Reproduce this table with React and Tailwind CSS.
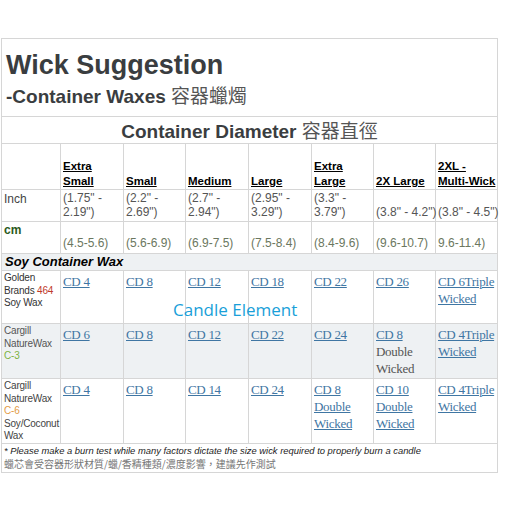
import React from "react";

const B = "border border-[#d6d6d6]";
const SANS = "font-['Liberation_Sans',Arial,'Noto_Sans_CJK_TC',sans-serif]";
const SERIF = "font-['Liberation_Serif','Times_New_Roman',serif]";

function L({ children, plain }) {
  return (
    <span className={plain ? "text-[#555]" : "text-[#3f76a3] underline underline-offset-[1px]"}>{children}</span>
  );
}

function LinkCell({ lines, bg = "" }) {
  return (
    <td className={`${B} ${bg} ${SERIF} align-top pl-[2px] pt-[2px] text-[13px] leading-[17px] tracking-[-0.3px]`}>
      {lines}
    </td>
  );
}

export default function App() {
  const sizes = [
    ["Extra", "Small"],
    ["Small"],
    ["Medium"],
    ["Large"],
    ["Extra", "Large"],
    ["2X Large"],
    ["2XL -", "Multi-Wick"],
  ];
  const inch = [
    ["(1.75\" -", "2.19\")"],
    ["(2.2\" -", "2.69\")"],
    ["(2.7\" -", "2.94\")"],
    ["(2.95\" -", "3.29\")"],
    ["(3.3\" -", "3.79\")"],
    ["(3.8\" - 4.2\")"],
    ["(3.8\" - 4.5\")"],
  ];
  const cm = ["(4.5-5.6)", "(5.6-6.9)", "(6.9-7.5)", "(7.5-8.4)", "(8.4-9.6)", "(9.6-10.7)", "9.6-11.4)"];
  const grey = "bg-[#eef1f3]";

  return (
    <div className={`relative w-[512px] h-[512px] bg-white pt-[38px] pl-px ${SANS}`}>
      <table className="table-fixed border-collapse w-[497px]">
        <colgroup>
          <col className="w-[59px]" />
          <col className="w-[63px]" />
          <col className="w-[62px]" />
          <col className="w-[63px]" />
          <col className="w-[63px]" />
          <col className="w-[62px]" />
          <col className="w-[62px]" />
          <col className="w-[62px]" />
        </colgroup>
        <tbody>
          <tr className="h-[78px]">
            <td colSpan={8} className={`${B} align-top pl-[4px] pt-[10px]`}>
              <div className="text-[27px] leading-[32px] font-bold text-[#3a3d40]">Wick Suggestion</div>
              <div className="mt-[3px] text-[19px] leading-[22px] font-bold text-[#3a3d40]">
                -Container Waxes{" "}
                <span className="font-normal text-[#555] font-['Noto_Sans_CJK_TC',sans-serif]">容器蠟燭</span>
              </div>
            </td>
          </tr>
          <tr className="h-[26px]">
            <td colSpan={8} className={`${B} text-center text-[19px] leading-[22px] font-bold text-[#3a3d40] pt-[2px]`}>
              Container Diameter{" "}
              <span className="font-normal text-[#555] font-['Noto_Sans_CJK_TC',sans-serif]">容器直徑</span>
            </td>
          </tr>
          <tr className="h-[46px]">
            <td className={B}></td>
            {sizes.map((s, i) => (
              <td key={i} className={`${B} align-bottom pl-[2px] pb-0 text-[11.5px] leading-[15px] font-bold text-black underline`}>
                {s.map((t, j) => (
                  <div key={j} className="whitespace-nowrap">{t}</div>
                ))}
              </td>
            ))}
          </tr>
          <tr className="h-[32px]">
            <td className={`${B} align-top pl-[2px] pt-[2px] text-[12px] leading-[14px] text-[#444]`}>Inch</td>
            {inch.map((s, i) => (
              <td key={i} className={`${B} align-bottom pl-[2px] pb-[2px] text-[12px] leading-[14px] text-[#555]`}>
                {s.map((t, j) => (
                  <div key={j} className="whitespace-nowrap">{t}</div>
                ))}
              </td>
            ))}
          </tr>
          <tr className="h-[32px]">
            <td className={`${B} align-top pl-[2px] pt-[1px] text-[12px] leading-[14px] font-bold text-[#2b5a1c]`}>cm</td>
            {cm.map((t, i) => (
              <td key={i} className={`${B} align-bottom pl-[2px] pb-[3px] text-[12px] leading-[14px] text-[#6b7760] whitespace-nowrap`}>
                {t}
              </td>
            ))}
          </tr>
          <tr className="h-[17px]">
            <td colSpan={8} className={`${B} ${grey} pl-[3px] text-[13px] leading-[16px] font-bold italic text-black`}>
              Soy Container Wax
            </td>
          </tr>
          <tr className="h-[53px]">
            <td className={`${B} align-top pl-[2px] pt-[1px] text-[10px] leading-[12.5px] text-[#333] tracking-[-0.2px]`}>
              Golden
              <br />
              Brands <span className="text-[#c0392b]">464</span>
              <br />
              Soy Wax
            </td>
            <LinkCell lines={<L>CD 4</L>} />
            <LinkCell lines={<L>CD 8</L>} />
            <LinkCell lines={<L>CD 12</L>} />
            <LinkCell lines={<L>CD 18</L>} />
            <LinkCell lines={<L>CD 22</L>} />
            <LinkCell lines={<L>CD 26</L>} />
            <LinkCell lines={<L>CD 6Triple Wicked</L>} />
          </tr>
          <tr className="h-[55px]">
            <td className={`${B} ${grey} align-top pl-[2px] pt-[1px] text-[10px] leading-[12.5px] text-[#555] tracking-[-0.2px]`}>
              Cargill
              <br />
              NatureWax
              <br />
              <span className="text-[#7cb342]">C-3</span>
            </td>
            <LinkCell bg={grey} lines={<L>CD 6</L>} />
            <LinkCell bg={grey} lines={<L>CD 8</L>} />
            <LinkCell bg={grey} lines={<L>CD 12</L>} />
            <LinkCell bg={grey} lines={<L>CD 22</L>} />
            <LinkCell bg={grey} lines={<L>CD 24</L>} />
            <LinkCell
              bg={grey}
              lines={
                <>
                  <L>CD 8</L>
                  <br />
                  <L plain>Double Wicked</L>
                </>
              }
            />
            <LinkCell bg={grey} lines={<L>CD 4Triple Wicked</L>} />
          </tr>
          <tr className="h-[63px]">
            <td className={`${B} align-top pl-[2px] pt-[1px] text-[10px] leading-[12.5px] text-[#444] tracking-[-0.2px]`}>
              Cargill
              <br />
              NatureWax
              <br />
              <span className="text-[#e39b45]">C-6</span>
              <br />
              Soy/Coconut Wax
            </td>
            <LinkCell lines={<L>CD 4</L>} />
            <LinkCell lines={<L>CD 8</L>} />
            <LinkCell lines={<L>CD 14</L>} />
            <LinkCell lines={<L>CD 24</L>} />
            <LinkCell lines={<L>CD 8 Double Wicked</L>} />
            <LinkCell lines={<L>CD 10 Double Wicked</L>} />
            <LinkCell lines={<L>CD 4Triple Wicked</L>} />
          </tr>
          <tr className="h-[29px]">
            <td colSpan={8} className={`${B} align-top pl-[2px] pt-[1px]`}>
              <div className="text-[9.4px] leading-[12px] italic text-[#222] whitespace-nowrap">
                * Please make a burn test while many factors dictate the size wick required to properly burn a candle
              </div>
              <div className="text-[10px] leading-[13px] text-[#777] whitespace-nowrap font-['Noto_Sans_CJK_TC',sans-serif]">
                蠟芯會受容器形狀材質/蠟/香精種類/濃度影響，建議先作測試
              </div>
            </td>
          </tr>
        </tbody>
      </table>
      <div className="absolute left-[173px] top-[301px] text-[17px] leading-[17px] text-[#199fd9] font-['Open_Sans',sans-serif]">
        Candle Element
      </div>
    </div>
  );
}
